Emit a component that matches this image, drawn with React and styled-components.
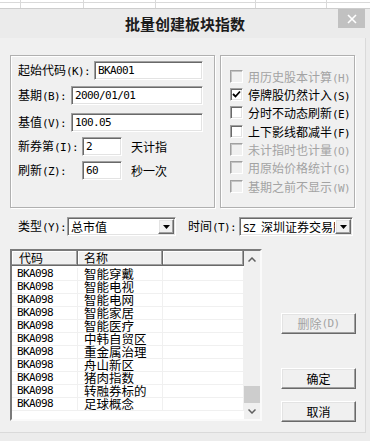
import React from 'react';
import styled, { createGlobalStyle } from 'styled-components';

const CJK = `"Noto Sans CJK SC", "Noto Sans", sans-serif`;
const MONO = `"DejaVu Sans Mono", "Liberation Mono", monospace`;

const GlobalStyle = createGlobalStyle`
  html, body {
    margin: 0;
    padding: 0;
    background: #ececec;
  }
  body {
    width: 370px;
    height: 441px;
    overflow: hidden;
    font-family: ${CJK};
    color: #000;
  }
`;

const Sheet = styled.div`
  display: flex;
  height: 9px;
  background: #fff;
  border-bottom: 1px solid #cdcdcd;
  box-sizing: border-box;
`;

const SheetCol = styled.div`
  width: ${(p) => (p.w ? `${p.w}px` : 'auto')};
  flex: ${(p) => (p.w ? 'none' : 1)};
  box-sizing: border-box;
  border-right: ${(p) => (p.w ? '1px solid #d9d9d9' : 'none')};
  &::before {
    content: '';
    display: block;
    height: 2px;
    border-bottom: 1px solid #d9d9d9;
  }
`;

const TitleBar = styled.div`
  display: grid;
  grid-template-columns: 1fr auto 1fr;
  height: 29px;
  background: #ebebeb;
`;

const Title = styled.div`
  grid-column: 2;
  align-self: center;
  font-size: 15px;
  font-weight: 700;
  color: #1c1c1c;
  margin-top: -1px;
`;

const CloseBtn = styled.div`
  grid-column: 3;
  justify-self: end;
  width: 27px;
  height: 19px;
  margin-right: 5px;
  background: #c1c1c1;
  display: flex;
  align-items: center;
  justify-content: center;
`;

const Body = styled.div`
  width: 366px;
  height: 395px;
  box-sizing: border-box;
  background: #f0f0f0;
  border-right: 1px solid #dadada;
  border-bottom: 1px solid #dadada;
  padding: 17px 0 0 10px;
  font-size: 12px;
`;

const TopRow = styled.div`
  display: flex;
  gap: 5px;
  height: 153px;
`;

const GroupBox = styled.div`
  width: ${(p) => p.w}px;
  box-sizing: border-box;
  border: 1px solid #b0b0b0;
  box-shadow: inset 1px 1px 0 #fff, 1px 1px 0 #fff;
  padding: ${(p) => p.pad};
`;

const FieldRow = styled.div`
  display: flex;
  align-items: center;
  height: 19px;
  margin-top: ${(p) => p.mt || 0}px;
`;

const Label = styled.span`
  width: ${(p) => (p.w ? `${p.w}px` : 'auto')};
  flex: none;
  margin-left: ${(p) => p.ml || 0}px;
  font-size: 12px;
  line-height: 19px;
  white-space: nowrap;
`;

const sunken = `
  box-sizing: border-box;
  background: #fff;
  border: 1px solid;
  border-color: #a0a0a0 #fff #fff #a0a0a0;
  box-shadow: inset 1px 1px 0 #696969, inset -1px -1px 0 #e3e3e3;
`;

const TextBox = styled.div`
  ${sunken}
  width: ${(p) => p.w}px;
  height: 19px;
  padding: 1px 0 0 3px;
  font-family: ${MONO};
  font-size: 11px;
  letter-spacing: -0.6px;
  line-height: 16px;
`;

const Suffix = styled.span`
  margin-left: 9px;
  font-size: 12px;
`;

const CheckRow = styled.div`
  display: flex;
  align-items: center;
  gap: 5px;
  height: 18.33px;
  font-size: 12px;
  color: ${(p) => (p.disabled ? '#a3a3a3' : '#000')};
  white-space: nowrap;
`;

const Box = styled.span`
  width: 13px;
  height: 13px;
  flex: none;
  box-sizing: border-box;
  border: 1px solid;
  border-color: #a0a0a0 #fff #fff #a0a0a0;
  box-shadow: ${(p) =>
    p.disabled
      ? 'inset 1px 1px 0 #c4c4c4'
      : 'inset 1px 1px 0 #696969, inset -1px -1px 0 #e3e3e3'};
  background: ${(p) => (p.disabled ? '#f0f0f0' : '#fff')};
  display: flex;
  align-items: center;
  justify-content: center;
`;

const TypeRow = styled.div`
  display: flex;
  align-items: center;
  height: 19px;
  margin-top: 9px;
  padding-left: 8px;
`;

const Select = styled.div`
  ${sunken}
  width: ${(p) => p.w}px;
  height: 19px;
  display: flex;
  align-items: stretch;
  padding: 1px 1px 1px 2px;
`;

const SelectText = styled.span`
  flex: 1;
  overflow: hidden;
  white-space: nowrap;
  font-size: 12px;
  line-height: 16px;
  padding-left: 1px;
`;

const Ascii = styled.span`
  font-family: ${MONO};
  font-size: 11px;
  letter-spacing: -0.6px;
`;

const raised = `
  box-sizing: border-box;
  background: #f0f0f0;
  border: 1px solid;
  border-color: #fff #696969 #696969 #fff;
  box-shadow: inset -1px -1px 0 #a0a0a0, inset 1px 1px 0 #e3e3e3;
`;

const ArrowBtn = styled.span`
  ${raised}
  width: 16px;
  flex: none;
  display: flex;
  align-items: center;
  justify-content: center;
`;

const BottomRow = styled.div`
  display: flex;
  margin-top: 13px;
`;

const ListBox = styled.div`
  width: 252px;
  height: 172px;
  box-sizing: border-box;
  border: 2px solid;
  border-color: #7a7a7a #fafafa #fafafa #7a7a7a;
  display: flex;
`;

const Table = styled.div`
  flex: 1;
  background: #fff;
  overflow: hidden;
`;

const HeadRow = styled.div`
  display: flex;
  height: 15px;
`;

const HeadCell = styled.div`
  width: ${(p) => (p.w ? `${p.w}px` : 'auto')};
  flex: ${(p) => (p.w ? 'none' : 1)};
  box-sizing: border-box;
  background: #f0f0f0;
  border-right: 1px solid #696969;
  border-bottom: 1px solid #696969;
  box-shadow: inset -1px -1px 0 #a0a0a0, inset 1px 1px 0 #fff;
  padding-left: ${(p) => p.pl || 0}px;
  font-size: 12px;
  line-height: 13px;
  white-space: nowrap;
`;

const Row = styled.div`
  display: flex;
  height: 13px;
  margin-top: ${(p) => (p.first ? 2 : 0)}px;
`;

const Cell = styled.div`
  width: ${(p) => (p.w ? `${p.w}px` : 'auto')};
  flex: ${(p) => (p.w ? 'none' : 1)};
  box-sizing: border-box;
  border-right: 1px solid #f0f0f0;
  border-bottom: 1px solid #f0f0f0;
  padding-left: ${(p) => p.pl || 0}px;
  font-family: ${(p) => (p.mono ? MONO : CJK)};
  font-size: ${(p) => (p.mono ? 11 : 12.5)}px;
  letter-spacing: ${(p) => (p.mono ? '-0.6px' : '0')};
  line-height: 12px;
  white-space: nowrap;
`;

const ScrollBar = styled.div`
  width: 16px;
  flex: none;
  background: #f0f0f0;
  display: flex;
  flex-direction: column;
`;

const ScrollBtn = styled.div`
  height: ${(p) => p.h}px;
  display: flex;
  align-items: center;
  justify-content: center;
`;

const Track = styled.div`
  flex: 1;
  display: flex;
  flex-direction: column;
  justify-content: flex-end;
`;

const Thumb = styled.div`
  height: 17px;
  background: #cdcdcd;
`;

const ButtonCol = styled.div`
  display: flex;
  flex-direction: column;
  margin-left: 19px;
  width: 75px;
`;

const Button = styled.div`
  ${raised}
  height: 21px;
  margin-top: ${(p) => p.mt}px;
  display: flex;
  align-items: center;
  justify-content: center;
  font-size: 12px;
  color: ${(p) => (p.disabled ? '#a3a3a3' : '#000')};
`;

// ASCII runs get the narrow half-width face, CJK stays in the sans
const T = ({ children }) =>
  String(children)
    .split(/([\x20-\x7e]+)/)
    .map((s, i) =>
      !s ? null : /^[\x20-\x7e]+$/.test(s) ? (
        <Ascii key={i}>{s}</Ascii>
      ) : (
        <React.Fragment key={i}>{s}</React.Fragment>
      )
    );

const Chevron = ({ up }) => (
  <svg width="8" height="5" viewBox="0 0 8 5">
    <path
      d={up ? 'M0.5 4.5 L4 1 L7.5 4.5' : 'M0.5 0.5 L4 4 L7.5 0.5'}
      fill="none"
      stroke="#606060"
      strokeWidth="1.5"
    />
  </svg>
);

const Tri = () => (
  <svg width="7" height="4" viewBox="0 0 7 4">
    <path d="M0 0 H7 L3.5 4 Z" fill="#000" />
  </svg>
);

const checks = [
  { t: '用历史股本计算(H)', d: true },
  { t: '停牌股仍然计入(S)', c: true },
  { t: '分时不动态刷新(E)' },
  { t: '上下影线都减半(F)' },
  { t: '未计指时也计量(O)', d: true },
  { t: '用原始价格统计(G)', d: true },
  { t: '基期之前不显示(W)', d: true },
];

const names = [
  '智能穿戴',
  '智能电视',
  '智能电网',
  '智能家居',
  '智能医疗',
  '中韩自贸区',
  '重金属治理',
  '舟山新区',
  '猪肉指数',
  '转融券标的',
  '足球概念',
];

export default function App() {
  return (
    <>
      <GlobalStyle />
      <Sheet>
        <SheetCol w={21} />
        <SheetCol w={63} />
        <SheetCol w={72} />
        <SheetCol w={100} />
        <SheetCol w={71} />
        <SheetCol />
      </Sheet>
      <TitleBar>
        <Title>批量创建板块指数</Title>
        <CloseBtn>
          <svg width="10" height="10" viewBox="0 0 10 10">
            <path d="M1 1 L9 9 M9 1 L1 9" stroke="#fff" strokeWidth="1.6" />
          </svg>
        </CloseBtn>
      </TitleBar>
      <Body>
        <TopRow>
          <GroupBox w={205} pad="5px 0 0 7px">
            <FieldRow>
              <Label w={76}><T>起始代码(K):</T></Label>
              <TextBox w={109}>BKA001</TextBox>
            </FieldRow>
            <FieldRow mt={6}>
              <Label w={53}><T>基期(B):</T></Label>
              <TextBox w={132}>2000/01/01</TextBox>
            </FieldRow>
            <FieldRow mt={8}>
              <Label w={53}><T>基值(V):</T></Label>
              <TextBox w={132}>100.05</TextBox>
            </FieldRow>
            <FieldRow mt={5}>
              <Label w={64}><T>新券第(I):</T></Label>
              <TextBox w={40}>2</TextBox>
              <Suffix>天计指</Suffix>
            </FieldRow>
            <FieldRow mt={5}>
              <Label w={64}><T>刷新(Z):</T></Label>
              <TextBox w={40}>60</TextBox>
              <Suffix>秒一次</Suffix>
            </FieldRow>
          </GroupBox>
          <GroupBox w={135} pad="11px 0 0 9px">
            {checks.map((c) => (
              <CheckRow key={c.t} disabled={c.d}>
                <Box disabled={c.d}>
                  {c.c && (
                    <svg width="9" height="9" viewBox="0 0 9 9">
                      <path
                        d="M1 4 L3.5 6.5 L8 1.5"
                        fill="none"
                        stroke="#000"
                        strokeWidth="1.8"
                      />
                    </svg>
                  )}
                </Box>
                <span>
                  <T>{c.t}</T>
                </span>
              </CheckRow>
            ))}
          </GroupBox>
        </TopRow>
        <TypeRow>
          <Label w={49}><T>类型(Y):</T></Label>
          <Select w={109}>
            <SelectText>总市值</SelectText>
            <ArrowBtn>
              <Tri />
            </ArrowBtn>
          </Select>
          <Label ml={12} w={51}><T>时间(T):</T></Label>
          <Select w={114}>
            <SelectText>
              <T>SZ 深圳证券交易所</T>
            </SelectText>
            <ArrowBtn>
              <Tri />
            </ArrowBtn>
          </Select>
        </TypeRow>
        <BottomRow>
          <ListBox>
            <Table>
              <HeadRow>
                <HeadCell w={66} pl={7}>代码</HeadCell>
                <HeadCell w={85} pl={6}>名称</HeadCell>
                <HeadCell />
              </HeadRow>
              {names.map((n, i) => (
                <Row key={n} first={i === 0}>
                  <Cell w={66} pl={5} mono>
                    BKA098
                  </Cell>
                  <Cell w={85} pl={6}>
                    {n}
                  </Cell>
                  <Cell />
                </Row>
              ))}
            </Table>
            <ScrollBar>
              <ScrollBtn h={17}>
                <Chevron up />
              </ScrollBtn>
              <Track>
                <Thumb />
              </Track>
              <ScrollBtn h={16}>
                <Chevron />
              </ScrollBtn>
            </ScrollBar>
          </ListBox>
          <ButtonCol>
            <Button mt={64} disabled>
              <T>删除(D)</T>
            </Button>
            <Button mt={34}>确定</Button>
            <Button mt={12}>取消</Button>
          </ButtonCol>
        </BottomRow>
      </Body>
    </>
  );
}
